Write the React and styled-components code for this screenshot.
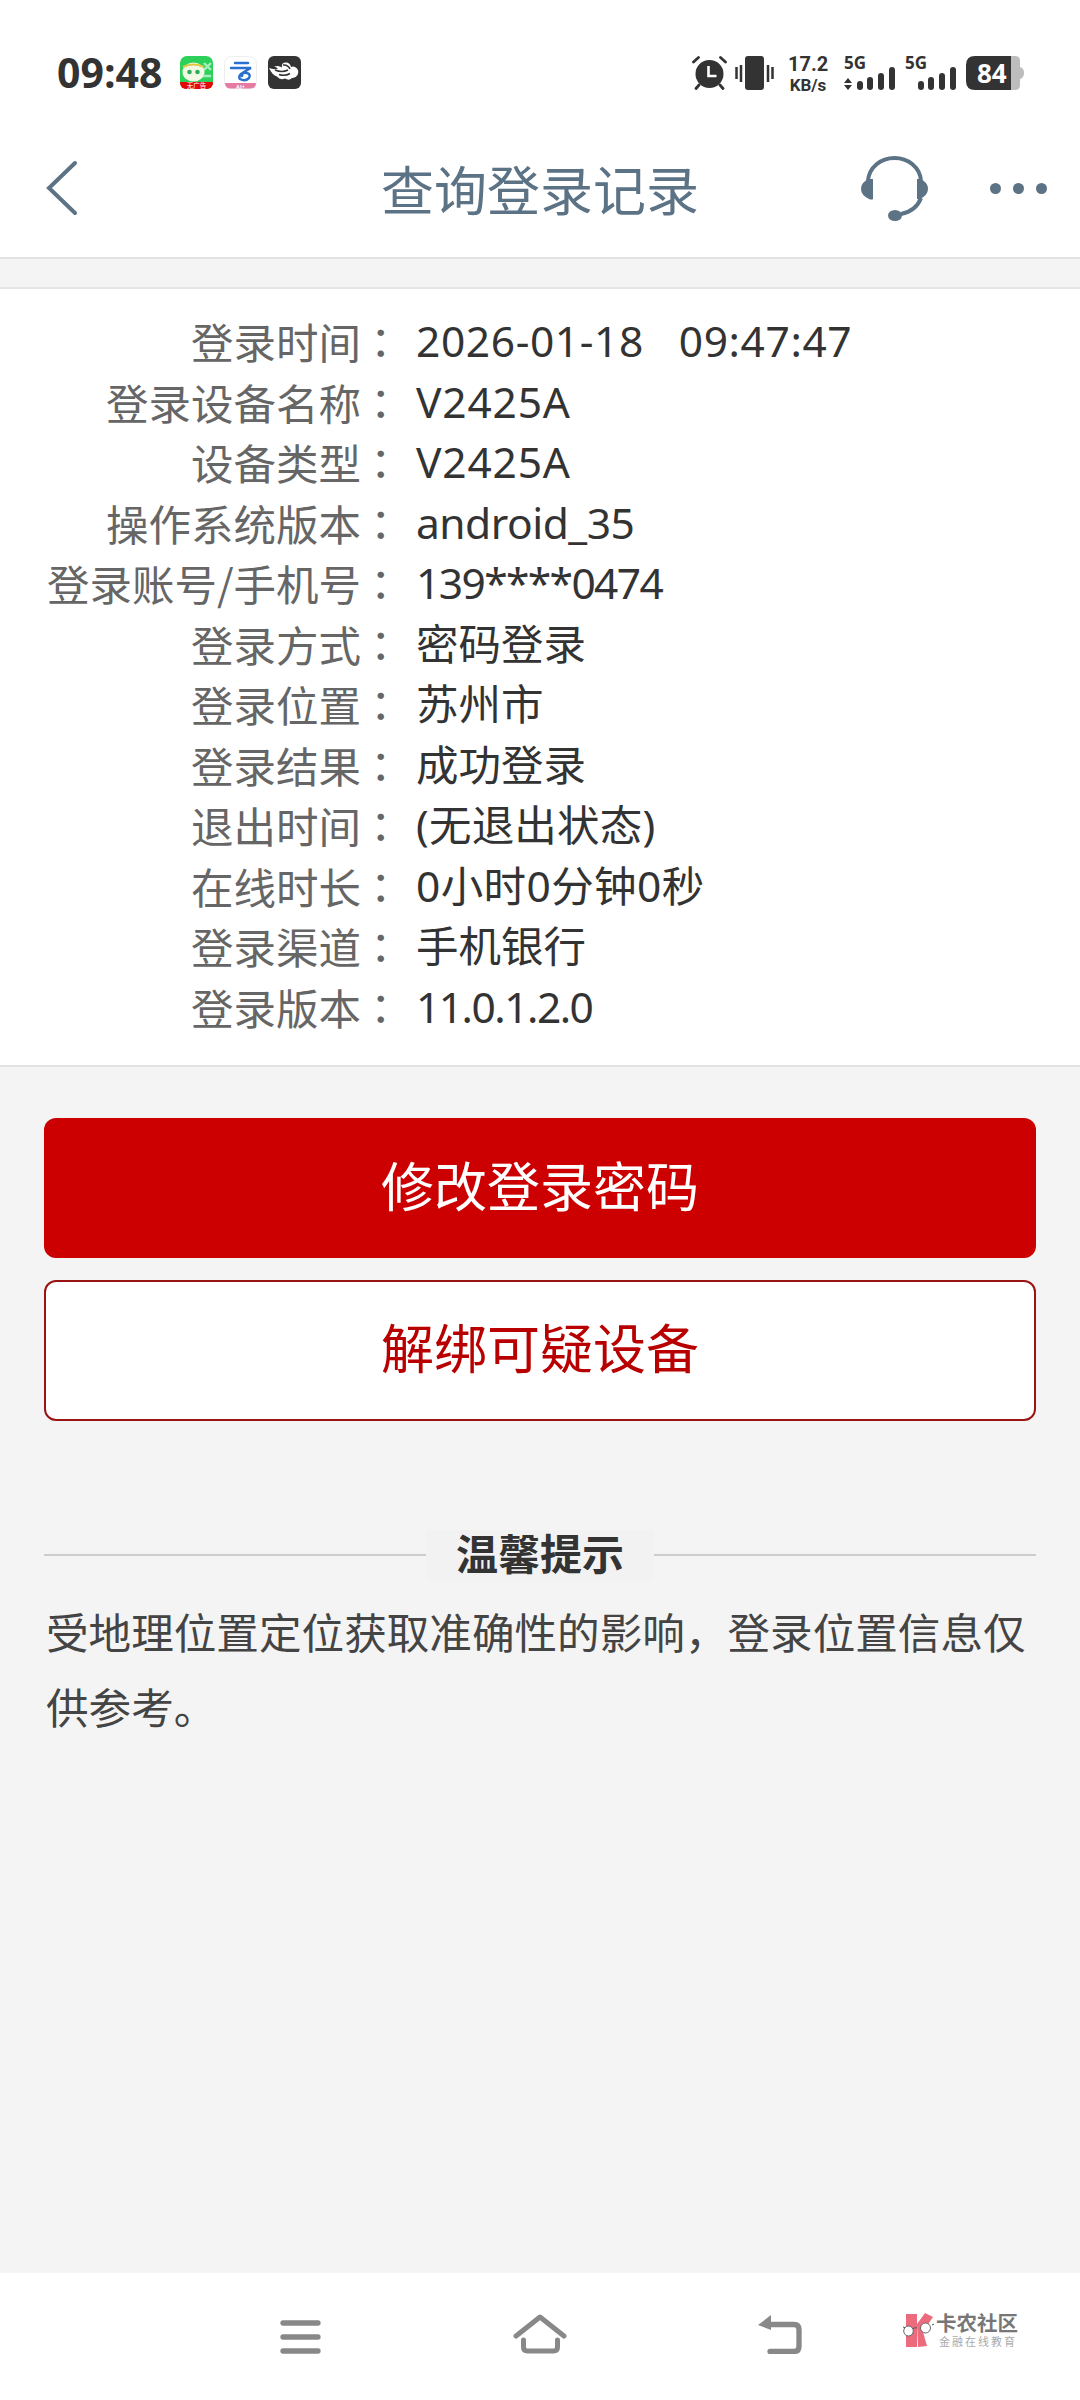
import React from "react";
import styled, { createGlobalStyle } from "styled-components";

const Global = createGlobalStyle`
  html, body { margin: 0; padding: 0; background: #fff; }
  * { box-sizing: border-box; }
`;
const cjk = `"Noto Sans CJK SC", "Noto Sans", sans-serif`;
const latinCjk = `"Noto Sans", "Noto Sans CJK SC", sans-serif`;

const Page = styled.div`
  width: 1080px; height: 2400px; display: flex; flex-direction: column;
  background: #f4f4f4; font-family: ${cjk}; overflow: hidden;
`;
const StatusBar = styled.div`
  height: 130px; background: #fff; display: flex; align-items: flex-start;
  padding: 55px 56px 0 57px; color: #333;
`;
const Clock = styled.div`
  font: 700 41px/34px "Open Sans", sans-serif; color: #333; width: 123px;
`;
const AppIcons = styled.div`display: flex; gap: 11px; margin-top: 1px;`;
const Spacer = styled.div`flex: 1;`;
const StatusIcons = styled.div`display: flex; align-items: flex-start; height: 34px; margin-top: 1px;`;
const Speed = styled.div`
  width: 40px; margin: -3px 16px 0 14px; text-align: center; color: #333;
  font: 700 20px/22px Roboto, sans-serif; white-space: nowrap;
  span { display: block; font-size: 17px; line-height: 21px; }
`;
const SignalBox = styled.div`
  position: relative; width: 51px; height: 34px; margin-right: ${p => p.$gap}px;
`;
const SignalLabel = styled.span`
  position: absolute; left: 0; top: -1px; font: 700 17px/16px "Open Sans", sans-serif; color: #333;
`;
const BatteryBox = styled.div`position: relative; width: 58px; height: 34px;`;
const BatteryNum = styled.span`
  position: absolute; left: 11px; top: 0; font: 700 26px/34px "Open Sans", sans-serif; color: #fff;
`;

const Header = styled.header`
  height: 129px; background: #fff; border-bottom: 2px solid #e2e2e2;
  display: grid; grid-template-columns: 1fr auto 1fr; align-items: center;
`;
const HeaderLeft = styled.div`padding: 0 0 12px 45px; display: flex;`;
const HeaderRight = styled.div`
  display: flex; justify-content: flex-end; align-items: center; gap: 62px; padding: 0 33px 10px 0;
`;
const Title = styled.h1`
  margin: 0 0 12px; font-weight: 400; font-size: 53px; line-height: 70px; color: #5c7285;
`;

const Band = styled.div`height: 30px; background: #f4f4f4; border-bottom: 2px solid #e4e4e4;`;
const Panel = styled.section`
  background: #fff; border-bottom: 2px solid #e2e2e2; padding: 22px 0 28px;
`;
const Row = styled.div`
  display: grid; grid-template-columns: 401px 1fr; column-gap: 15px;
  font-size: 42.5px; line-height: 60.5px; white-space: nowrap;
`;
const Label = styled.div`color: #666; text-align: right; font-weight: 400;`;
const LabelText = styled.span`margin-right: -1.6px;`;
const Colon = styled.span`font-family: "Noto Sans CJK TC", sans-serif; margin-right: -1px;`;
const Value = styled.div`
  color: #333; font-weight: 400; white-space: pre; font-family: ${latinCjk};
  letter-spacing: ${p => p.$track}px;
`;

const Main = styled.main`
  flex: 1; padding: 51px 44px 0; display: flex; flex-direction: column;
`;
const Button = styled.button`
  height: ${p => (p.$primary ? 140 : 141)}px; border-radius: 12px; font-family: ${cjk}; font-size: 53px;
  padding: 0 0 9px; display: block; width: 100%; margin-bottom: 22px; flex: none;
  background: ${p => (p.$primary ? "#cc0000" : "#fff")};
  color: ${p => (p.$primary ? "#fff" : "#b80000")};
  border: ${p => (p.$primary ? "none" : "2px solid #9a1414")};
`;
const TipHead = styled.div`display: flex; align-items: center; margin-top: 87px;`;
const TipLine = styled.div`flex: 1; height: 2px; background: #ccc;`;
const TipTitle = styled.div`
  width: 228px; height: 50px; text-align: center; font-weight: 700; font-size: 42px; line-height: 44px; color: #333;
  background: #f2f2f2;
`;
const TipText = styled.p`
  margin: 13px 0 0; padding-left: 2px; font-size: 42.6px; line-height: 75px; color: #444; font-weight: 400;
`;
const Nav = styled.nav`
  height: 127px; background: #fff; display: flex; align-items: flex-end;
  padding: 0 0 46px 280px;
`;
const NavSlot = styled.div`width: ${p => p.$w}px; display: flex;`;
const Logo = styled.div`display: flex; align-items: center; margin-bottom: 6px;`;
const LogoText = styled.div`
  margin-left: 1px; color: #777; font-size: 20.5px; line-height: 23px; font-weight: 700; white-space: nowrap;
  span { display: block; font-size: 11px; line-height: 14px; letter-spacing: 2px; margin-left: 3px; color: #aaa; font-weight: 400; }
`;

const rows = [
  ["登录时间", "2026-01-18   09:47:47", 0.6],
  ["登录设备名称", "V2425A", 0.8],
  ["设备类型", "V2425A", 0.8],
  ["操作系统版本", "android_35", -0.5],
  ["登录账号/手机号", "139****0474", -1.6],
  ["登录方式", "密码登录", 0],
  ["登录位置", "苏州市", 0],
  ["登录结果", "成功登录", 0],
  ["退出时间", "(无退出状态)", 0.2],
  ["在线时长", "0小时0分钟0秒", 0.4],
  ["登录渠道", "手机银行", 0],
  ["登录版本", "11.0.1.2.0", -1.5],
];

const FrogApp = () => (
  <svg width="33" height="33" viewBox="0 0 33 33">
    <rect width="33" height="33" rx="7" fill="#2dd159" />
    <path d="M0 26h33v1a6 6 0 0 1-6 6H6a6 6 0 0 1-6-6z" fill="#e50a0a" />
    <ellipse cx="13.500" cy="16" rx="11" ry="9.500" fill="#f2fae6" />
    <path d="M3 11q10-5 21 0" fill="none" stroke="#e0c63c" strokeWidth="2.200" />
    <circle cx="9.500" cy="16" r="2.300" fill="#2fae5a" />
    <circle cx="17.500" cy="16" r="2.300" fill="#2fae5a" />
    <path d="M24 7l7 7M31 7l-7 7M23 20h8" stroke="#a7eec0" strokeWidth="2.400" />
    <text x="16.500" y="32" textAnchor="middle" fontSize="6.500" fill="#fff" fontFamily={cjk}>无广告</text>
  </svg>
);
const CloudApp = () => (
  <svg width="33" height="33" viewBox="0 0 33 33">
    <rect x="0.500" y="0.500" width="32" height="32" rx="7" fill="#fff" stroke="#eee" />
    <path d="M1 27h31q0 5.500-6 5.500H7q-6 0-6-5.500z" fill="#e57ba0" />
    <path d="M11 7h13M7 12h20q-6 3-10 6-3 3-1 5 5 3 9-1 2-4-2-5-5-1-5 3" fill="none" stroke="#2a70d0" strokeWidth="2.500" strokeLinecap="round" />
    <text x="16.500" y="32.500" textAnchor="middle" fontSize="5.500" fontWeight="700" fill="#fff" fontFamily="Open Sans">AI+</text>
  </svg>
);
const DarkApp = () => (
  <svg width="33" height="33" viewBox="0 0 33 33">
    <rect width="33" height="33" rx="6" fill="#333" />
    <path d="M1 12q5 2 9 .5-2-1.500-4-2 5-1.500 8 1-1-5 4-5 4 0 5 4.500 3-1.500 5.500 1 3 3 1 7-2 3.500-5.500 3-3 3-7 .5-5 2-8-2-4.500-1-8-8.500z" fill="#fff" />
    <path d="M7 14q7 3 13 0M11 18.500q6 2 11-1M15 9q5-.5 7 4" fill="none" stroke="#333" strokeWidth="1.600" />
  </svg>
);
const Alarm = () => (
  <svg width="35" height="34" viewBox="0 0 35 34" style={{ marginRight: 8 }}>
    <circle cx="17.500" cy="18" r="14" fill="#333" />
    <path d="M16.500 10v10h8" fill="none" stroke="#fff" strokeWidth="2.600" />
    <path d="M1.500 6L6.500 1.500M33.500 6L28.500 1.500M7 29l-3 3.500M28 29l3 3.500" stroke="#333" strokeWidth="2.800" strokeLinecap="round" />
  </svg>
);
const Vibrate = () => (
  <svg width="39" height="34" viewBox="0 0 39 34">
    <rect x="10" y="0" width="19" height="34" rx="3" fill="#333" />
    <path d="M1.500 11v12M6 9v17M33 9v17M37.500 11v12" stroke="#333" strokeWidth="2.500" />
  </svg>
);
const Signal = ({ arrows }) => (
  <svg width="51" height="34" viewBox="0 0 51 34">
    {arrows && <path d="M4 22l4 5H0zM4 34l-4-5h8z" fill="#333" />}
    <rect x="13" y="25" width="6" height="9" rx="3" fill="#333" />
    <rect x="23" y="21" width="6" height="13" rx="3" fill="#333" />
    <rect x="34" y="17" width="6" height="17" rx="3" fill="#333" />
    <rect x="45" y="11" width="6" height="23" rx="3" fill="#333" />
  </svg>
);
const Battery = () => (
  <svg width="58" height="34" viewBox="0 0 58 34">
    <path d="M45 0h4q5 0 5 5v6q4 1 4 6t-4 6v6q0 5-5 5h-4z" fill="#bdbdbd" />
    <path d="M9 0h36v34H9q-9 0-9-9V9q0-9 9-9z" fill="#333" />
  </svg>
);
const Back = () => (
  <svg width="34" height="56" viewBox="0 0 34 56">
    <path d="M30 3L4 28l26 25" fill="none" stroke="#5c7285" strokeWidth="4" strokeLinecap="round" />
  </svg>
);
const Headset = () => (
  <svg width="67" height="65" viewBox="0 0 67 65" fill="#5c7285">
    <path d="M7 25C8 11 20 2 33.500 2S59 11 60 25" fill="none" stroke="#5c7285" strokeWidth="4" />
    <path d="M60 42Q55 55 40 58" fill="none" stroke="#5c7285" strokeWidth="4" />
    <path d="M12 23v20q-1 1-4 0-8-4-8-10 0-7 8-10z" />
    <path d="M56 23v20h3q8-4 8-10 0-7-8-10z" />
    <ellipse cx="34" cy="59.500" rx="7" ry="5.500" />
  </svg>
);
const Dots = () => (
  <svg width="57" height="11" viewBox="0 0 57 11" fill="#5c7285">
    <circle cx="5.500" cy="5.500" r="5.500" /><circle cx="28.500" cy="5.500" r="5.500" /><circle cx="51.500" cy="5.500" r="5.500" />
  </svg>
);
const Menu = () => (
  <svg width="41" height="34" viewBox="0 0 41 34">
    <path d="M3 3h35M3 17h35M3 31h35" stroke="#888" strokeWidth="5.300" strokeLinecap="round" />
  </svg>
);
const Home = () => (
  <svg width="54" height="40" viewBox="0 0 54 40" fill="none" stroke="#888" strokeWidth="5" strokeLinecap="round" strokeLinejoin="round">
    <path d="M3 22L27 3l24 19" />
    <path d="M10.500 26v7q0 4 4 4h26q4 0 4-4v-7" />
  </svg>
);
const Return = () => (
  <svg width="45" height="39" viewBox="0 0 45 39">
    <path d="M12 9.500h24q5 0 5 5v17q0 5-5 5H12" fill="none" stroke="#888" strokeWidth="5.300" strokeLinecap="round" />
    <path d="M13 0v15L0 10z" fill="#888" />
  </svg>
);
const KLogo = () => (
  <svg width="33" height="34" viewBox="0 0 33 34">
    <path d="M4 1h11v33H4z" fill="#ec6b7c" />
    <path d="M15 11L23 0l8 4-10 15 4 14-9 1z" fill="#ec6b7c" />
    <path d="M10 16q3-2 5-1M1 14l3 1M30 12l2-1" fill="none" stroke="#555" />
    <ellipse cx="6.500" cy="18" rx="4.800" ry="5" fill="#fff" stroke="#666" />
    <ellipse cx="23.500" cy="15" rx="5" ry="5" fill="#fff" stroke="#666" />
  </svg>
);

export default function App() {
  return (
    <Page>
      <Global />
      <StatusBar>
        <Clock>09:48</Clock>
        <AppIcons><FrogApp /><CloudApp /><DarkApp /></AppIcons>
        <Spacer />
        <StatusIcons>
          <Alarm />
          <Vibrate />
          <Speed>17.2<span>KB/s</span></Speed>
          <SignalBox $gap={10}><Signal arrows /><SignalLabel>5G</SignalLabel></SignalBox>
          <SignalBox $gap={10}><Signal /><SignalLabel>5G</SignalLabel></SignalBox>
          <BatteryBox><Battery /><BatteryNum>84</BatteryNum></BatteryBox>
        </StatusIcons>
      </StatusBar>
      <Header>
        <HeaderLeft><Back /></HeaderLeft>
        <Title>查询登录记录</Title>
        <HeaderRight><Headset /><Dots /></HeaderRight>
      </Header>
      <Band />
      <Panel>
        {rows.map(([l, v, t]) => (
          <Row key={l}>
            <Label><LabelText>{l}</LabelText><Colon>：</Colon></Label>
            <Value $track={t}>{v}</Value>
          </Row>
        ))}
      </Panel>
      <Main>
        <Button $primary>修改登录密码</Button>
        <Button>解绑可疑设备</Button>
        <TipHead><TipLine /><TipTitle>温馨提示</TipTitle><TipLine /></TipHead>
        <TipText>受地理位置定位获取准确性的影响，登录位置信息仅供参考。</TipText>
      </Main>
      <Nav>
        <NavSlot $w={233}><Menu /></NavSlot>
        <NavSlot $w={245}><Home /></NavSlot>
        <NavSlot $w={144}><Return /></NavSlot>
        <Logo><KLogo /><LogoText>卡农社区<span>金融在线教育</span></LogoText></Logo>
      </Nav>
    </Page>
  );
}
